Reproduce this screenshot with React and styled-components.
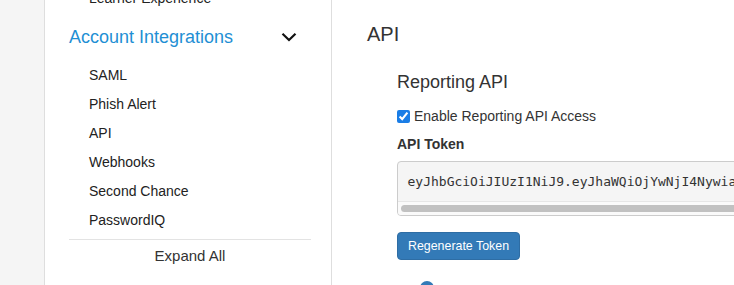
import React from 'react';
import styled, { createGlobalStyle } from "styled-components";


const GlobalStyle = createGlobalStyle`
    html, body {
        margin: 0;
        overflow: hidden;
        background: #fff;
    }
    body {
        font-family: "Liberation Sans", Arial, Helvetica, sans-serif;
        color: #333;
    }
`;

const Page = styled.div`
    display: flex;
    width: 1200px;
    height: 285px;
    overflow: hidden;
`;

const Rail = styled.div`
    width: 44px;
    flex: none;
    background: #f5f5f5;
    border-right: 1px solid #dedede;
`;

const Sidebar = styled.nav`
    width: 287px;
    flex: none;
    box-sizing: border-box;
    padding: 0 20px 0 24px;
    border-right: 1px solid #dedede;
`;

const SidebarScroll = styled.div`
    margin-top: -16px;
`;

const SubItem = styled.div`
    height: 29px;
    line-height: 29px;
    padding-left: 20px;
    font-size: 14px;
    color: #222;
    white-space: nowrap;
`;

const GroupHeading = styled.div`
    display: flex;
    align-items: center;
    justify-content: space-between;
    height: 48px;
    padding-right: 14px;
    font-size: 18px;
    color: #1f8fd4;
`;

const SubList = styled.div`
    padding-bottom: 4px;
    border-bottom: 1px solid #e3e3e3;
`;

const ExpandAll = styled.div`
    height: 32px;
    line-height: 32px;
    text-align: center;
    font-size: 15px;
    color: #333;
`;

const Main = styled.main`
    flex: 1;
    padding: 22px 0 0 35px;
`;

const Title = styled.h1`
    margin: 0;
    font-size: 20px;
    line-height: 24px;
    font-weight: 400;
    color: #333;
`;

const Section = styled.section`
    padding: 25px 40px 0 30px;
`;

const SectionTitle = styled.h2`
    margin: 0;
    font-size: 18px;
    line-height: 22px;
    font-weight: 400;
    color: #333;
`;

const CheckRow = styled.label`
    display: flex;
    align-items: center;
    margin-top: 13px;
    height: 20px;
    font-size: 14px;
    color: #333;

    input {
        width: 13px;
        height: 13px;
        margin: 0 4px 0 0;
        accent-color: #1a7de6;
    }
`;

const FieldLabel = styled.div`
    margin-top: 8px;
    font-size: 14px;
    line-height: 20px;
    font-weight: 700;
    color: #333;
`;

const TokenBox = styled.div`
    margin-top: 7px;
    background: #f5f5f5;
    border: 1px solid #ccc;
    border-radius: 4px;
    overflow: hidden;
`;

const TokenText = styled.pre`
    margin: 0;
    padding: 9.5px;
    font-family: "DejaVu Sans Mono", "Liberation Mono", monospace;
    font-size: 13px;
    line-height: 20px;
    color: #333;
    white-space: pre;
    overflow: hidden;
`;

const ScrollTrack = styled.div`
    height: 14px;
    box-sizing: border-box;
    padding: 3px;
    background: #fafafa;
    border-top: 1px solid #e6e6e6;
`;

const ScrollThumb = styled.div`
    height: 7px;
    border-radius: 4px;
    background: #c1c1c1;
`;

const Button = styled.button`
    display: block;
    margin-top: 16px;
    height: 28px;
    padding: 0 10px;
    font-family: inherit;
    font-size: 12.4px;
    color: #fff;
    background: #337ab7;
    border: 1px solid #2e6da4;
    border-radius: 4px;
`;

const HelpIcon = styled.svg`
    display: block;
    margin: 21px 0 0 23px;
`;


const Chevron = () => (
    <svg width="16" height="10" viewBox="0 0 16 10">
        <path d="M1.5 1.8 L8 8 L14.5 1.8" fill="none" stroke="#111" strokeWidth="2.2" />
    </svg>
);


const items = ["SAML", "Phish Alert", "API", "Webhooks", "Second Chance", "PasswordIQ"];

const token = "eyJhbGciOiJIUzI1NiJ9.eyJhaWQiOjYwNjI4NywiaWF0IjoxNjE0ODk2MTIzfQ.x3Yh8pQkR2vLw9ZcT5mNbA1fGuJ7sEoD4iK0rWqXyHl";


const App = () => {
    return (
        <>
            <GlobalStyle />
            <Page>
                <Rail />
                <Sidebar>
                    <SidebarScroll>
                        <SubItem>Learner Experience</SubItem>
                        <GroupHeading>
                            Account Integrations
                            <Chevron />
                        </GroupHeading>
                        <SubList>
                            {items.map(item => <SubItem key={item}>{item}</SubItem>)}
                        </SubList>
                        <ExpandAll>Expand All</ExpandAll>
                    </SidebarScroll>
                </Sidebar>
                <Main>
                    <Title>API</Title>
                    <Section>
                        <SectionTitle>Reporting API</SectionTitle>
                        <CheckRow>
                            <input type="checkbox" defaultChecked />
                            Enable Reporting API Access
                        </CheckRow>
                        <FieldLabel>API Token</FieldLabel>
                        <TokenBox>
                            <TokenText>{token}</TokenText>
                            <ScrollTrack>
                                <ScrollThumb style={{ width: "70%" }} />
                            </ScrollTrack>
                        </TokenBox>
                        <Button>Regenerate Token</Button>
                        <HelpIcon width="14" height="14" viewBox="0 0 14 14">
                            <circle cx="7" cy="7" r="7" fill="#337ab7" />
                        </HelpIcon>
                    </Section>
                </Main>
            </Page>
        </>
    )
};

export default App
